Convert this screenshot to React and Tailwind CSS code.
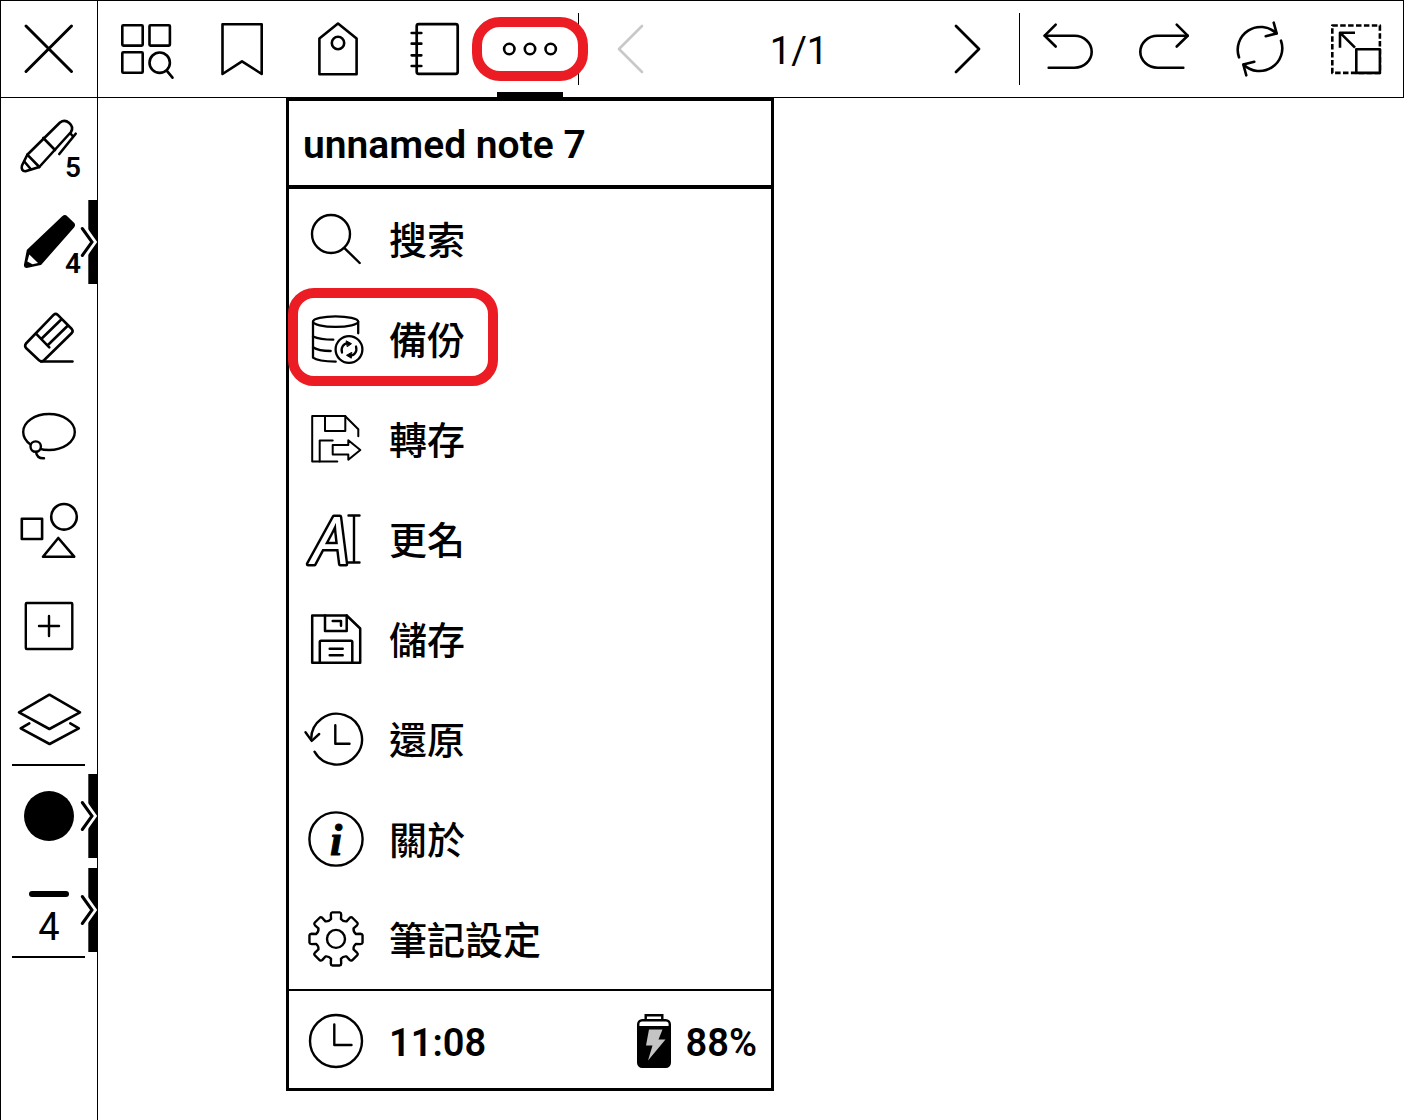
import React from "react";

const Icon = ({ children, width = 3, className = "" }) => (
  <svg
    viewBox="0 0 64 64"
    fill="none"
    stroke="currentColor"
    strokeWidth={width}
    strokeLinecap="round"
    strokeLinejoin="round"
    aria-hidden="true"
    className={`size-16 shrink-0 overflow-visible ${className}`}
  >
    {children}
  </svg>
);

// eight teeth around the hub
const gearPath = () => {
  const point = (radius, deg) => {
    const a = (deg * Math.PI) / 180;
    return `${(31 + radius * Math.cos(a)).toFixed(2)} ${(
      31.9 +
      radius * Math.sin(a)
    ).toFixed(2)}`;
  };
  let d = "";
  for (let i = 0; i < 8; i++) {
    const a = i * 45;
    d += `${i === 0 ? "M" : "L"}${point(20.5, a - 14)}`;
    d += `L${point(25, a - 12)}Q${point(26.8, a - 11)} ${point(26.8, a - 8)}`;
    d += `L${point(26.8, a + 8)}Q${point(26.8, a + 11)} ${point(25, a + 12)}`;
    d += `L${point(20.5, a + 14)}Q${point(18.6, a + 22.5)} ${point(20.5, a + 31)}`;
  }
  return d + "Z";
};

const CloseIcon = () => (
  <Icon>
    <path d="M9 9L54.5 54.5M54.5 9L9 54.5" />
  </Icon>
);

const PagesIcon = () => (
  <Icon width={2.6}>
    <rect x="8.3" y="8.2" width="20.4" height="20.4" rx="1" />
    <rect x="35.5" y="8.2" width="20.4" height="20.4" rx="1" />
    <rect x="8.3" y="35.3" width="20.4" height="20.4" rx="1" />
    <circle cx="45.7" cy="45.7" r="10.2" />
    <path d="M52.7 53.7L58.5 60.7" />
  </Icon>
);

const BookmarkIcon = () => (
  <Icon width={2.6}>
    <path d="M12.5 7.2H51.7V57L32 44.3L12.5 57Z" />
  </Icon>
);

const TagIcon = () => (
  <Icon width={2.6}>
    <path d="M32 6.5L50.6 21.5V57.3H13.4V21.5Z" />
    <circle cx="32" cy="26" r="6.2" />
  </Icon>
);

const NotebookIcon = () => (
  <Icon width={2.7}>
    <rect x="14.7" y="7.2" width="41" height="49.6" rx="2" />
    <path d="M9.7 16H19.3M9.7 26.7H19.3M9.7 38.3H19.3M9.7 49H19.3" />
  </Icon>
);

const MoreIcon = () => (
  <Icon width={2.6}>
    <circle cx="11.3" cy="32" r="5.2" />
    <circle cx="32" cy="32" r="5.2" />
    <circle cx="52.7" cy="32" r="5.2" />
  </Icon>
);

const PrevIcon = () => (
  <Icon width={2.6}>
    <path d="M43 9L20 32L43 55" />
  </Icon>
);

const NextIcon = () => (
  <Icon width={2.8}>
    <path d="M21 9L44 32L21 55" />
  </Icon>
);

const UndoIcon = () => (
  <Icon width={2.6}>
    <path d="M19.7 7.7L8.7 18.7L19.7 29.5" />
    <path d="M8.7 18.7H38.5C48 18.7 55.7 26 55.7 34.7S48 50.7 38.5 50.7H12.7" />
  </Icon>
);

const RedoIcon = () => (
  <Icon width={2.6}>
    <path d="M44.7 7.7L55.7 18.7L44.7 29.5" />
    <path d="M55.7 18.7H25.5C16 18.7 8.3 26 8.3 34.7S16 50.7 25.5 50.7H51.3" />
  </Icon>
);

const RefreshIcon = () => (
  <Icon width={2.6}>
    <path d="M11 40.3A22.8 22.8 0 0 1 48.3 16.3" />
    <path d="M45.7 5.7L48.7 16.5L37.7 19.3" />
    <path d="M53 23.7A22.8 22.8 0 0 1 15.7 47.7" />
    <path d="M18.3 58.3L15.3 47.5L26.3 44.7" />
  </Icon>
);

const ResizeIcon = () => (
  <Icon width={2.6}>
    <rect
      x="8.3"
      y="8.5"
      width="47.6"
      height="47.4"
      strokeDasharray="5.5 2.4"
      strokeLinecap="butt"
    />
    <path d="M32.3 32.3H55.9V55.9H32.3Z" fill="white" />
    <path d="M31 15.7H16V30.7M16 15.7L31 30.7" strokeLinecap="butt" />
  </Icon>
);

const PenIcon = () => (
  <Icon width={2.6}>
    <path d="M10.3 40.7L43 8.5C49 4 58 11 54 18L22.3 53L8.5 57.3C5.5 57.5 4 55 5 51.5Z" />
    <path d="M26.3 24L38 36M10.3 40.7L22.3 53M7.3 47.5L13.7 55" />
    <path d="M58.7 19.7L42.3 40M53.5 19.5L56 22.5" />
  </Icon>
);

const PencilIcon = () => (
  <Icon width={1.5}>
    <path
      d="M10.5 40.3L46 6.5Q48 5 50 7L56.5 13.3Q58 15 56.5 17L23.7 54.2L9.5 57.3Q7.5 57 7.7 55Z"
      fill="currentColor"
    />
    <path d="M12.3 44.5L21 53L15.5 54.3L10.3 51.5Z" fill="white" stroke="none" />
  </Icon>
);

const EraserIcon = () => (
  <Icon width={2.6}>
    <path d="M36.8 8.7Q38.7 7 40.5 8.7L54.8 23Q56.5 25 54.8 27L27 54.3Q24.5 56.5 22 54.3L9 42Q7.3 40 9 37.5Z" />
    <path d="M24 55.5H55.5M19 27.7L32.3 41.3M44 13.7L24.5 32.7M50.7 19.7L30.7 39.3" />
  </Icon>
);

const LassoIcon = () => (
  <Icon width={2.4}>
    <ellipse cx="32" cy="30" rx="25.8" ry="18" />
    <circle cx="18.7" cy="44.6" r="5.2" fill="white" />
    <path d="M19 50C19.5 54 22 56.5 27 56.3" />
  </Icon>
);

const ShapesIcon = () => (
  <Icon width={2.6}>
    <rect x="4.8" y="20.7" width="20.3" height="20.3" />
    <circle cx="47" cy="18.8" r="12.8" />
    <path d="M41.3 40L57.2 58.7H26Z" />
  </Icon>
);

const InsertIcon = () => (
  <Icon width={2.4}>
    <rect x="8.8" y="9" width="46.5" height="46" rx="1" />
    <path d="M32 22V42M22 32H42" />
  </Icon>
);

const LayersIcon = () => (
  <Icon width={2.6}>
    <path d="M32.4 7.7L63 25.3L32.4 42L2 25.3Z" />
    <path d="M12.3 36.3L3.7 41.3L32.6 57L61.8 41.3L53.3 36.3" />
  </Icon>
);

const SearchIcon = () => (
  <Icon width={2.4}>
    <circle cx="26" cy="27" r="19" />
    <path d="M39.7 41.3L54.7 56" />
  </Icon>
);

const BackupIcon = () => (
  <Icon width={2.3}>
    <ellipse cx="30.6" cy="14.6" rx="22.6" ry="5.3" />
    <path d="M53.2 14.7V26.3M8 14.7V50.7C11 53 20 54.5 30.7 54.7" />
    <path d="M8 29.5C13 31.8 20 32.7 28.3 32.7M8 40.3C12 43 18 44 25.7 44" />
    <circle cx="44" cy="42.5" r="13.4" />
    <path d="M37 45.5C35.5 40.5 38.5 36.5 43 36.2M51 39.5C52.5 44.5 49.5 48.5 45 48.8" />
    <path
      d="M41.5 34L46.5 36.7L42.5 39.5ZM46.5 45.5L41.5 48.3L46 51Z"
      fill="currentColor"
      strokeWidth="1"
    />
  </Icon>
);

const ExportIcon = () => (
  <Icon width={2}>
    <path d="M32.3 54.5H7.2V9H40L53.3 22.3V29.3" />
    <path d="M20 9V23.9H40.3V9M27.7 33.5H14.7V54.5" />
    <path d="M27.7 38H43.3V33.3L55.3 43L43.3 52.7V47.5H27.7Z" />
  </Icon>
);

const RenameIcon = () => (
  <Icon width={2.4}>
    <text
      x="7"
      y="56.8"
      fill="white"
      strokeWidth="5"
      className="font-['Open_Sans'] text-[66px] font-medium italic [paint-order:stroke]"
    >
      A
    </text>
    <path d="M43.5 8.5H54.5M43.5 55.5H54.5M49 8.5V55.5" />
  </Icon>
);

const SaveIcon = () => (
  <Icon width={2.5}>
    <path d="M7.2 8.5H41.7L55.2 21.5V55.7H7.2Z" />
    <path d="M20 8.5V24H41.7V8.5M27.7 14H36V18.7" />
    <path d="M14.8 55.7V35Q14.8 33.7 16 33.7H46Q47.3 33.7 47.3 35V55.7M24.7 41.8H37.7M24.7 48.3H37.7" />
  </Icon>
);

const RestoreIcon = () => (
  <Icon width={2.4}>
    <path d="M9.5 44.7A25.4 25.4 0 1 0 6.2 33" />
    <path d="M0.5 25.3L6.7 33.9L14.2 27M30.3 18.3V36.7H44.5" />
  </Icon>
);

const InfoIcon = () => (
  <Icon width={2.4}>
    <circle cx="31" cy="32" r="26.6" />
    <text
      x="31"
      y="48"
      textAnchor="middle"
      fill="currentColor"
      strokeWidth="1"
      className="font-['Liberation_Serif'] text-[44px] font-bold italic"
    >
      i
    </text>
  </Icon>
);

const SettingsIcon = () => (
  <Icon width={2.4}>
    <path d={gearPath()} />
    <circle cx="31" cy="31.9" r="9" />
  </Icon>
);

const ClockIcon = () => (
  <Icon width={2.4}>
    <circle cx="31" cy="32" r="26" />
    <path d="M29.3 15.5V36H46.5" />
  </Icon>
);

const BatteryIcon = () => (
  <svg viewBox="0 0 36 56" className="h-14 w-9 shrink-0" aria-hidden="true">
    <path d="M9.7 7V2.2H26.3V7" fill="none" stroke="black" strokeWidth="2.4" />
    <rect
      x="2.2"
      y="7.2"
      width="31.6"
      height="46.6"
      rx="4"
      fill="white"
      stroke="black"
      strokeWidth="2.4"
    />
    <path d="M3 13H33V50Q33 54 29 54H7Q3 54 3 50Z" fill="black" />
    <path d="M13 16.5H26.5L22.5 26.5H29.5L12 47.5L16.5 32.5H10Z" fill="#c4c4c4" />
  </svg>
);

const noteTools = [
  { label: "Pages", icon: PagesIcon },
  { label: "Bookmark", icon: BookmarkIcon },
  { label: "Tag", icon: TagIcon },
  { label: "Notebook", icon: NotebookIcon },
  { label: "More", icon: MoreIcon, active: true },
];

const editTools = [
  { label: "Undo", icon: UndoIcon },
  { label: "Redo", icon: RedoIcon },
  { label: "Refresh", icon: RefreshIcon },
  { label: "Resize", icon: ResizeIcon },
];

const drawTools = [
  { label: "Pen", icon: PenIcon, size: 5 },
  { label: "Pencil", icon: PencilIcon, size: 4, expandable: true },
  { label: "Eraser", icon: EraserIcon },
  { label: "Lasso", icon: LassoIcon },
  { label: "Shapes", icon: ShapesIcon },
  { label: "Insert", icon: InsertIcon },
];

const menuItems = [
  { label: "搜索", icon: SearchIcon },
  { label: "備份", icon: BackupIcon, marked: true },
  { label: "轉存", icon: ExportIcon },
  { label: "更名", icon: RenameIcon },
  { label: "儲存", icon: SaveIcon },
  { label: "還原", icon: RestoreIcon },
  { label: "關於", icon: InfoIcon },
  { label: "筆記設定", icon: SettingsIcon },
];

const ToolButton = ({ label, icon: ToolIcon, active }) => (
  <button
    type="button"
    aria-label={label}
    className="relative flex w-24 shrink-0 items-center justify-center"
  >
    <ToolIcon />
    {active && (
      <>
        <span className="absolute inset-x-[15px] bottom-0 h-[5px] bg-black" />
        <span className="absolute -inset-x-[10px] inset-y-4 z-10 rounded-[28px] border-10 border-[#eb1c24]" />
      </>
    )}
  </button>
);

const ExpandTab = () => (
  <svg
    viewBox="0 0 20 84"
    fill="none"
    aria-hidden="true"
    className="absolute top-1/2 right-0 h-21 w-5 -translate-y-1/2"
  >
    <path d="M11.3 0H20V84H11.3Z" fill="black" />
    <path d="M4 26L15.3 42L4 58" stroke="white" strokeWidth="8" />
    <path
      d="M5.3 28.5L15 42L5.3 55.5"
      stroke="black"
      strokeWidth="3"
      strokeLinecap="round"
    />
  </svg>
);

const TopBar = () => (
  <header className="flex h-[98px] border-y border-black shadow-[inset_-1px_0_0_black]">
    <div className="flex border-r border-black">
      <ToolButton label="Close" icon={CloseIcon} />
    </div>
    {noteTools.map((tool) => (
      <ToolButton key={tool.label} {...tool} />
    ))}
    <div className="my-3 w-px bg-black" />
    <div className="flex flex-1 items-stretch justify-between px-1">
      <button
        type="button"
        aria-label="Previous page"
        disabled
        className="flex w-24 items-center justify-center text-[#c8c8c8]"
      >
        <PrevIcon />
      </button>
      <span className="self-center pt-1 text-[38px] leading-10">1/1</span>
      <ToolButton label="Next page" icon={NextIcon} />
    </div>
    <div className="my-3 w-px bg-black" />
    {editTools.map((tool) => (
      <ToolButton key={tool.label} {...tool} />
    ))}
  </header>
);

const SideBar = () => (
  <aside className="flex w-[97px] shrink-0 flex-col border-r border-black">
    {drawTools.map(({ label, icon: ToolIcon, size, expandable }) => (
      <button
        key={label}
        type="button"
        aria-label={label}
        className="relative flex h-24 items-center justify-center"
      >
        <ToolIcon />
        {size && (
          <span className="absolute right-4 bottom-3 text-[28px] leading-7 font-semibold">
            {size}
          </span>
        )}
        {expandable && <ExpandTab />}
      </button>
    ))}
    <button
      type="button"
      aria-label="Layers"
      className="flex h-[90px] items-center justify-center"
    >
      <LayersIcon />
    </button>
    <div className="mr-3 ml-[11px] h-0.5 bg-black" />
    <button
      type="button"
      aria-label="Color"
      className="relative mt-0.5 flex h-24 items-center justify-center"
    >
      <span className="size-[50px] rounded-full bg-black" />
      <ExpandTab />
    </button>
    <button
      type="button"
      aria-label="Line width"
      className="relative flex h-[92px] flex-col items-center justify-center gap-2.5 pt-4.5"
    >
      <span className="h-1.5 w-10 rounded-full bg-black" />
      <span className="text-[38px] leading-10">4</span>
      <ExpandTab />
    </button>
    <div className="mr-3 ml-[11px] h-0.5 bg-black" />
  </aside>
);

const NoteMenu = () => (
  <section className="absolute top-0 left-[188px] w-[488px] border-3 border-black bg-white">
    <h1 className="flex h-22 items-center border-b-4 border-black pt-1 pl-3.5 text-[39px] font-semibold">
      unnamed note 7
    </h1>
    <ul>
      {menuItems.map(({ label, icon: ItemIcon, marked }) => (
        <li key={label} className="relative">
          <button
            type="button"
            className="flex h-25 w-full items-center gap-5 pl-4 text-left font-['Noto_Sans_CJK_TC',sans-serif] text-[38px] font-medium"
          >
            <ItemIcon />
            <span className="pb-1">{label}</span>
          </button>
          {marked && (
            <span className="pointer-events-none absolute -top-px -left-px h-[98px] w-[210px] rounded-[26px] border-10 border-[#eb1c24]" />
          )}
        </li>
      ))}
    </ul>
    <footer className="flex h-[99px] items-center border-t-2 border-black pt-0.5 pr-3.5 pl-4 text-[38px] font-semibold">
      <ClockIcon />
      <span className="pt-1.5 pl-5">11:08</span>
      <span className="ml-auto flex items-center gap-3.5">
        <BatteryIcon />
        <span className="pt-1.5">88%</span>
      </span>
    </footer>
  </section>
);

const App = () => {
  return (
    <div className="flex min-h-screen flex-col border-l border-black bg-white font-[Roboto,'Noto_Sans_CJK_TC',sans-serif] text-black">
      <TopBar />
      <div className="flex flex-1">
        <SideBar />
        <main className="relative min-h-[1000px] flex-1">
          <NoteMenu />
        </main>
      </div>
    </div>
  );
};

export default App;
